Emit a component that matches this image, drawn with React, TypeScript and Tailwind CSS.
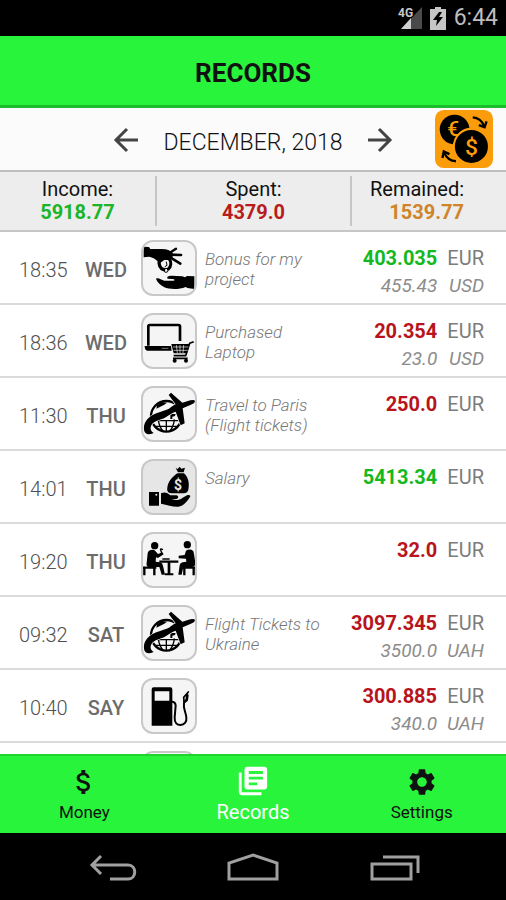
import type { ReactNode } from "react";
import { MdAttachMoney, MdLibraryBooks, MdSettings } from "react-icons/md";

type IconName = "bonus" | "laptop" | "travel" | "salary" | "dining" | "fuel";

type Money = { value: string; currency: string };

type RecordItem = {
  time: string;
  day: string;
  icon: IconName;
  note?: string;
  income?: boolean;
  main: Money;
  original?: Money;
};

const records: RecordItem[] = [
  {
    time: "18:35",
    day: "WED",
    icon: "bonus",
    note: "Bonus for my project",
    income: true,
    main: { value: "403.035", currency: "EUR" },
    original: { value: "455.43", currency: "USD" },
  },
  {
    time: "18:36",
    day: "WED",
    icon: "laptop",
    note: "Purchased Laptop",
    main: { value: "20.354", currency: "EUR" },
    original: { value: "23.0", currency: "USD" },
  },
  {
    time: "11:30",
    day: "THU",
    icon: "travel",
    note: "Travel to Paris (Flight tickets)",
    main: { value: "250.0", currency: "EUR" },
  },
  {
    time: "14:01",
    day: "THU",
    icon: "salary",
    note: "Salary",
    income: true,
    main: { value: "5413.34", currency: "EUR" },
  },
  {
    time: "19:20",
    day: "THU",
    icon: "dining",
    main: { value: "32.0", currency: "EUR" },
  },
  {
    time: "09:32",
    day: "SAT",
    icon: "travel",
    note: "Flight Tickets to Ukraine",
    main: { value: "3097.345", currency: "EUR" },
    original: { value: "3500.0", currency: "UAH" },
  },
  {
    time: "10:40",
    day: "SAY",
    icon: "fuel",
    main: { value: "300.885", currency: "EUR" },
    original: { value: "340.0", currency: "UAH" },
  },
];

const drawings: Record<IconName, ReactNode> = {
  bonus: (
    <>
      <path d="M8 20 L24 21 L28 27 L62 27 C78 27 88 31 96 40 L94 54 L84 60 L70 60 L56 70 C48 62 42 56 30 52 L24 50 L8 52 Z" />
      <g fill="none" stroke="#000" strokeLinecap="round">
        <path d="M84 40 L105 26" strokeWidth="7" />
        <path d="M84 44 L120 45" strokeWidth="8" />
        <path d="M84 50 L118 71" strokeWidth="8" />
        <path d="M56 58 C51 74 58 86 68 89" strokeWidth="10" />
        <path d="M84 56 C92 66 91 80 82 87" strokeWidth="9" />
        <path d="M76 66 L78 76 L72 80" strokeWidth="3" />
      </g>
      <circle cx="75" cy="91" r="6" fill="none" stroke="#000" strokeWidth="3" />
      <path d="M45 116 C52 112 60 119 70 122 L98 122 C104 120 98 117 92 117 L80 116 C76 110 82 107 92 107 L124 109 L132 112 L138 108 L160 109 V147 L140 144 L134 141 C112 150 84 148 70 142 C58 135 48 126 45 116 Z" />
    </>
  ),
  laptop: (
    <>
      <path d="M22 98 V40 Q22 36 26 36 H112 Q117 36 117 40 V84" fill="none" stroke="#000" strokeWidth="8" />
      <path d="M11 99 H90 L92 113 H18 Q11 111 11 99 Z" />
      <path d="M62 106 H82" stroke="#777" strokeWidth="3" />
      <path d="M158 86 L146 91 L134 128 H98" fill="none" stroke="#000" strokeWidth="5" strokeLinejoin="round" />
      <path d="M91 93 H146 L138 121 H98 Z" />
      <path d="M96 102 H142 M98 112 H140 M106 96 L109 120 M117 96 V120 M128 96 L126 120" stroke="#f5f5f5" strokeWidth="2" />
      <path d="M96 136 H140" stroke="#000" strokeWidth="5" />
      <circle cx="101" cy="143" r="6" />
      <circle cx="135" cy="143" r="6" />
    </>
  ),
  travel: (
    <>
      <g fill="none" stroke="#000">
        <circle cx="76" cy="91" r="46" strokeWidth="7" />
        <path d="M52 100 Q54 124 68 137 M100 100 Q98 124 84 137" strokeWidth="4" />
        <path d="M76 104 V138 M40 104 H114 M44 121 H108" strokeWidth="4" />
      </g>
      <path d="M48 58 L62 48 L78 50 L70 56 L58 62 L46 68 Z" />
      <path d="M88 84 L104 84 L102 90 L94 92 V99 H88 Z" />
      <path
        d="M10 136 C4 112 20 92 46 82 C62 76 76 72 84 68 C92 62 98 58 104 55 L83 27 L90 20 L124 50 L148 43 Q160 40 162 45 Q162 52 148 57 L125 67 L131 112 L119 118 L104 77 C96 80 88 84 80 90 C66 102 38 102 31 118 C26 128 30 136 38 141 C24 147 14 146 10 136 Z"
        stroke="#f5f5f5"
        strokeWidth="4"
        paintOrder="stroke"
      />
    </>
  ),
  salary: (
    <>
      <path d="M104 27 L110 30 L116 23 L121 29 L132 26 L128 40 H111 Z" />
      <path d="M109 43 H129 C142 55 146 72 142 92 C140 101 134 103 119 103 H96 C82 103 77 98 79 86 C81 68 92 56 109 43 Z" />
      <text x="111" y="92" fill="#e6e6e6" fontSize="42" fontWeight="bold" textAnchor="middle">
        $
      </text>
      <path d="M24 99 H54 V140 H24 Z" />
      <circle cx="46" cy="107" r="3" fill="#e6e6e6" />
      <path d="M60 103 C72 98 80 102 88 109 L106 109 C114 110 113 119 106 120 L92 121 C102 125 116 124 124 117 L138 109 C144 106 150 109 147 114 C138 128 126 142 112 143 C96 144 80 138 60 134 Z" />
    </>
  ),
  dining: (
    <>
      <circle cx="41" cy="41" r="11" />
      <circle cx="139" cy="38" r="11" />
      <path d="M20 64 Q22 53 34 53 Q42 53 45 59 L51 66 L64 61 L68 67 L51 78 L45 76 L44 89 L58 91 Q65 94 66 101 L72 128 H62 L55 105 H22 Q15 102 17 92 Z" />
      <path d="M62 63 L58 51 M58 50 L66 53" fill="none" stroke="#000" strokeWidth="4" />
      <path d="M152 53 Q159 56 159 66 L163 92 Q163 104 154 105 H127 L122 128 H112 L116 100 Q117 93 125 91 L136 89 L135 80 L113 79 V71 L131 69 L135 56 Q142 51 152 53 Z" />
      <g fill="none" stroke="#000">
        <path d="M6 107 H46 M10 105 V130 M40 105 V130" strokeWidth="7" />
        <path d="M122 107 H163 M130 105 V130 M158 105 V130" strokeWidth="7" />
        <path d="M55 89 H112" strokeWidth="7" />
        <path d="M84 90 V126" strokeWidth="8" />
        <path d="M72 127 H97" strokeWidth="6" />
        <path d="M64 81 H86" strokeWidth="5" />
      </g>
    </>
  ),
  fuel: (
    <>
      <path fillRule="evenodd" d="M32 34 Q32 28 38 28 H88 Q94 28 94 34 V143 H32 Z M41 40 V68 H85 V40 Z" />
      <g fill="none" stroke="#000" strokeLinecap="round" strokeLinejoin="round">
        <path d="M94 71 Q103 72 104 82 L101 118 C100 136 109 141 118 141 C130 141 138 132 136 118 C134 100 126 92 129 76" strokeWidth="6" />
        <path d="M129 70 L128 58 L142 42" strokeWidth="5" />
        <path d="M130 72 L137 66 L139 52" strokeWidth="8" />
      </g>
    </>
  ),
};

function RecordIcon({ name }: { name?: IconName }) {
  return (
    <span
      className={
        "block h-14 w-14 shrink-0 overflow-hidden rounded-xl border-2 border-[#c8c8c8] " +
        (name === "salary" ? "bg-[#e6e6e6]" : "bg-[#f5f5f5]")
      }
    >
      {name && (
        <svg viewBox="6 6 156 156" className="h-full w-full" aria-hidden="true">
          {drawings[name]}
        </svg>
      )}
    </span>
  );
}

function StatusBar() {
  return (
    <div className="flex h-9 shrink-0 items-center justify-end bg-black pr-2 text-[#bdbdbd]">
      <svg viewBox="0 0 26 24" className="h-6 w-[26px]" aria-hidden="true">
        <path d="M25 1 V23 H4 Z" fill="#4a4a4a" />
        <path d="M14 12 V23 H4 Z" fill="#d0d0d0" />
        <text x="1" y="11" fill="#c8c8c8" stroke="#000" strokeWidth="2" paintOrder="stroke" fontSize="12" fontWeight="bold">
          4G
        </text>
      </svg>
      <svg viewBox="0 0 16 24" className="ml-[7px] h-6 w-4" aria-hidden="true">
        <path d="M5 1 H11 V3 H16 V24 H0 V3 H5 Z" fill="#c6c6c6" />
        <path d="M9 6 L3 14 H7 L6 20 L13 11 H9 L12 6 Z" fill="#000" />
      </svg>
      <span className="ml-2 text-[23px] leading-9">6:44</span>
    </div>
  );
}

function Arrow({ flip }: { flip?: boolean }) {
  return (
    <svg viewBox="0 0 26 26" className={flip ? "h-[26px] w-[26px] rotate-180" : "h-[26px] w-[26px]"} aria-hidden="true">
      <path d="M25 13 H3 M14 2 L3 13 L14 24" fill="none" stroke="#444" strokeWidth="3" />
    </svg>
  );
}

function CurrencyIcon() {
  return (
    <svg viewBox="0 0 172 172" className="h-[58px] w-[58px]" aria-hidden="true">
      <rect width="172" height="172" rx="26" fill="#fb9d0b" />
      <circle cx="58" cy="58" r="44" />
      <text x="54" y="78" fill="#fb9d0b" fontSize="62" fontWeight="500" textAnchor="middle">
        €
      </text>
      <circle cx="108" cy="108" r="52" stroke="#fb9d0b" strokeWidth="6" />
      <text x="108" y="132" fill="#fb9d0b" fontSize="68" fontWeight="500" textAnchor="middle">
        $
      </text>
      <g fill="none" stroke="#000" strokeWidth="7">
        <path d="M112 22 Q136 24 146 48" />
        <path d="M130 45 L147 51 L153 34" />
        <path d="M62 152 Q38 150 28 128" />
        <path d="M22 142 L26 123 L43 131" />
      </g>
    </svg>
  );
}

function MonthBar() {
  return (
    <div className="grid shrink-0 grid-cols-[1fr_auto_1fr] items-center border-b-2 border-[#bfbfbf] bg-[#fbfbfb] py-[2px]">
      <button type="button" aria-label="Previous month" className="mt-[2px] mr-[25px] justify-self-end">
        <Arrow />
      </button>
      <h2 className="pt-2 text-[23px] leading-7 font-light">DECEMBER, 2018</h2>
      <div className="flex items-center justify-between">
        <button type="button" aria-label="Next month" className="mt-[2px] ml-[25px]">
          <Arrow flip />
        </button>
        <button type="button" aria-label="Change currency" className="mr-[13px]">
          <CurrencyIcon />
        </button>
      </div>
    </div>
  );
}

function Summary() {
  return (
    <dl className="grid shrink-0 grid-cols-[157fr_195fr_154fr] border-b-2 border-[#c6c6c6] bg-[#ededed] py-1 text-[20px] leading-[23px]">
      <div className="border-r-2 border-[#c6c6c6] py-[2px] text-center">
        <dt>Income:</dt>
        <dd className="font-bold text-[#1cb528]">5918.77</dd>
      </div>
      <div className="border-r-2 border-[#c6c6c6] py-[2px] text-center">
        <dt>Spent:</dt>
        <dd className="font-bold text-[#b91c1c]">4379.0</dd>
      </div>
      <div className="py-[2px] pr-[42px] text-right">
        <dt>Remained:</dt>
        <dd className="font-bold text-[#cf8428]">1539.77</dd>
      </div>
    </dl>
  );
}

function RecordRow({ item }: { item: RecordItem }) {
  return (
    <li className="flex border-b-2 border-[#dadada] pt-2 pr-[22px] pb-1 pl-[19px]">
      <span className="w-[57px] self-center text-[20px] leading-6 font-light text-[#505050]">{item.time}</span>
      <span className="w-[60px] self-center text-center text-[20px] leading-6 font-medium text-[#6c6c6c]">{item.day}</span>
      <span className="mb-[3px] ml-[5px]">
        <RecordIcon name={item.icon} />
      </span>
      <p className="ml-2 w-[125px] pt-[9px] text-[17px] leading-5 font-light text-[#777] italic">{item.note}</p>
      <div className="ml-auto grid grid-cols-[auto_auto] content-start gap-x-[10px] pt-[5px] text-right leading-[27px]">
        <span className={"text-[20px] font-bold " + (item.income ? "text-[#14b820]" : "text-[#b8141c]")}>
          {item.main.value}
        </span>
        <span className="text-[20px] text-[#7c7c7c]">{item.main.currency}</span>
        {item.original && (
          <>
            <span className="text-[19px] text-[#8c8c8c] italic">{item.original.value}</span>
            <span className="text-[19px] text-[#8c8c8c] italic">{item.original.currency}</span>
          </>
        )}
      </div>
    </li>
  );
}

function TabBar() {
  return (
    <nav className="grid shrink-0 grid-cols-3 border-t-2 border-[#1fd631] bg-[#29f43c] text-[17px] leading-6">
      <button type="button" className="flex flex-col items-center gap-[2px] pt-[10px] pb-[9px]">
        <MdAttachMoney size={32} />
        Money
      </button>
      <button type="button" aria-current="page" className="flex flex-col items-center gap-[2px] pt-2 pb-[9px] text-[20px] text-white">
        <MdLibraryBooks size={34} />
        Records
      </button>
      <button type="button" className="flex flex-col items-center gap-[2px] pt-[10px] pb-[9px]">
        <MdSettings size={32} />
        Settings
      </button>
    </nav>
  );
}

function SystemBar() {
  return (
    <div className="grid h-[67px] shrink-0 grid-cols-3 place-items-center bg-black px-[42px]">
      <button type="button" aria-label="Back">
        <svg viewBox="0 0 52 28" className="h-7 w-[52px]" fill="none" stroke="#a0a0a0" strokeWidth="3">
          <path d="M15 3 L6 12 L15 21 M6 12 H42 C51 12 51 26 42 26 H24" />
        </svg>
      </button>
      <button type="button" aria-label="Home">
        <svg viewBox="0 0 52 28" className="h-7 w-[52px]" fill="none" stroke="#a0a0a0" strokeWidth="3">
          <path d="M2 26 V10 L26 2 L50 10 V26 Z" />
        </svg>
      </button>
      <button type="button" aria-label="Recent apps">
        <svg viewBox="0 0 52 28" className="h-7 w-[52px]" fill="none" stroke="#a0a0a0" strokeWidth="3">
          <path d="M4 11 H43 V26 H4 Z M15 4 H50 V20" />
        </svg>
      </button>
    </div>
  );
}

export default function App() {
  return (
    <div className="flex h-screen flex-col bg-white font-[Roboto,sans-serif] text-[#111]">
      <StatusBar />
      <header className="flex h-[72px] shrink-0 items-center justify-center border-b-[3px] border-[#1cbc2a] bg-[#29f43c] pt-1">
        <h1 className="text-[26px] leading-8 font-bold">RECORDS</h1>
      </header>
      <MonthBar />
      <Summary />
      <main className="min-h-0 flex-1 overflow-hidden">
        <ul>
          {records.map((item) => (
            <RecordRow key={item.time} item={item} />
          ))}
          <li className="flex pt-2 pl-[141px]">
            <RecordIcon />
          </li>
        </ul>
      </main>
      <TabBar />
      <SystemBar />
    </div>
  );
}
